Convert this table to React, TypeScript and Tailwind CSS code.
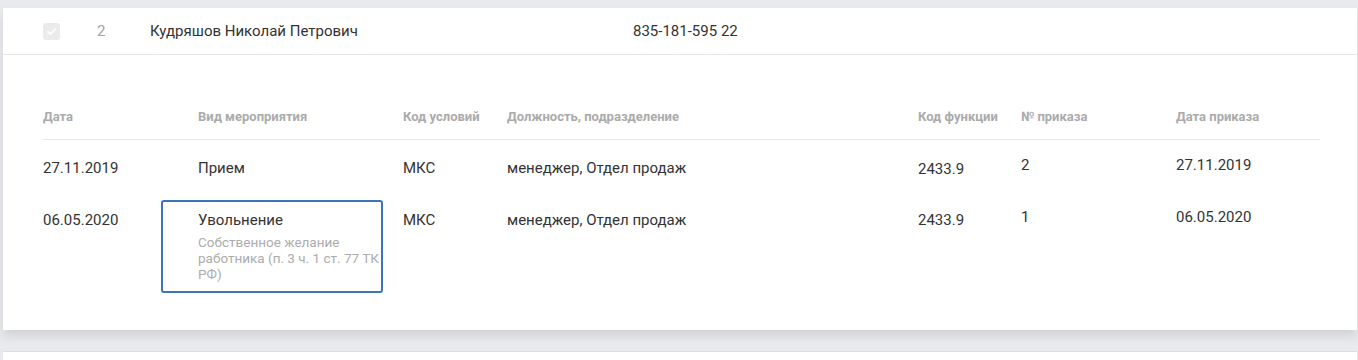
const columns = [
  { title: 'Дата', width: 'w-[155px]' },
  { title: 'Вид мероприятия', width: 'w-[205px]' },
  { title: 'Код условий', width: 'w-[104px]' },
  { title: 'Должность, подразделение', width: 'w-[411px]' },
  { title: 'Код функции', width: 'w-[103px]' },
  { title: '№ приказа', width: 'w-[155px]' },
  { title: 'Дата приказа', width: 'flex-1' },
]

function Check() {
  return (
    <div className="flex h-[17px] w-[17px] items-center justify-center rounded-[3px] bg-[#ebebeb]">
      <svg width="11" height="11" viewBox="0 0 12 12" fill="none">
        <path d="M2 6.2 4.8 9 10 3.4" stroke="#fff" strokeWidth="1.8" strokeLinecap="round" strokeLinejoin="round" />
      </svg>
    </div>
  )
}

export default function App() {
  return (
    <div className="min-h-[360px] bg-[#e8eaed] pt-[8px] pl-[3px] pr-[1px] font-['Roboto','Liberation_Sans',sans-serif] text-[15px] text-[#333]">
      <div className="bg-white shadow-[0_6px_10px_rgba(0,0,0,0.10)]">
        {/* employee row */}
        <div className="flex h-[47px] items-center border-b border-[#e6e6e6] pl-[40px]">
          <div className="w-[54px]">
            <Check />
          </div>
          <div className="w-[53px] text-[#a3a3a3]">2</div>
          <div className="w-[483px]">Кудряшов Николай Петрович</div>
          <div>835-181-595 22</div>
        </div>

        {/* expanded details */}
        <div className="pt-[54px] pb-[37px] pl-[40px] pr-[37px]">
          <div className="flex border-b border-[#e8e8e8] pb-[14px] text-[13px] leading-[16px] font-bold text-[#ababab]">
            {columns.map((c) => (
              <div key={c.title} className={c.width}>
                {c.title}
              </div>
            ))}
          </div>

          <div className="flex h-[60px] pt-[18px] leading-[20px]">
            <div className="w-[155px]">27.11.2019</div>
            <div className="w-[205px]">Прием</div>
            <div className="w-[104px]">МКС</div>
            <div className="w-[411px]">менеджер, Отдел продаж</div>
            <div className="w-[103px] mt-[1px]">2433.9</div>
            <div className="w-[155px] -mt-[3px]">2</div>
            <div className="flex-1 -mt-[3px]">27.11.2019</div>
          </div>

          <div className="flex items-start leading-[20px]">
            <div className="w-[155px] pt-[10px]">06.05.2020</div>
            <div className="w-[205px]">
              <div className="-ml-[37px] w-[222px] rounded-[3px] border-2 border-[#3a75bb] pt-[8px] pb-[9px] pl-[35px] pr-0">
                <div>Увольнение</div>
                <div className="mt-[4px] text-[13.5px] leading-[16px] text-[#acacac]">
                  Собственное желание работника (п. 3 ч. 1 ст. 77 ТК РФ)
                </div>
              </div>
            </div>
            <div className="w-[104px] pt-[10px]">МКС</div>
            <div className="w-[411px] pt-[10px]">менеджер, Отдел продаж</div>
            <div className="w-[103px] pt-[10px]">2433.9</div>
            <div className="w-[155px] pt-[7px]">1</div>
            <div className="flex-1 pt-[7px]">06.05.2020</div>
          </div>
        </div>
      </div>

      <div className="mt-[21px] h-[20px] border-t border-[#dcdfe3] bg-white" />
    </div>
  )
}
